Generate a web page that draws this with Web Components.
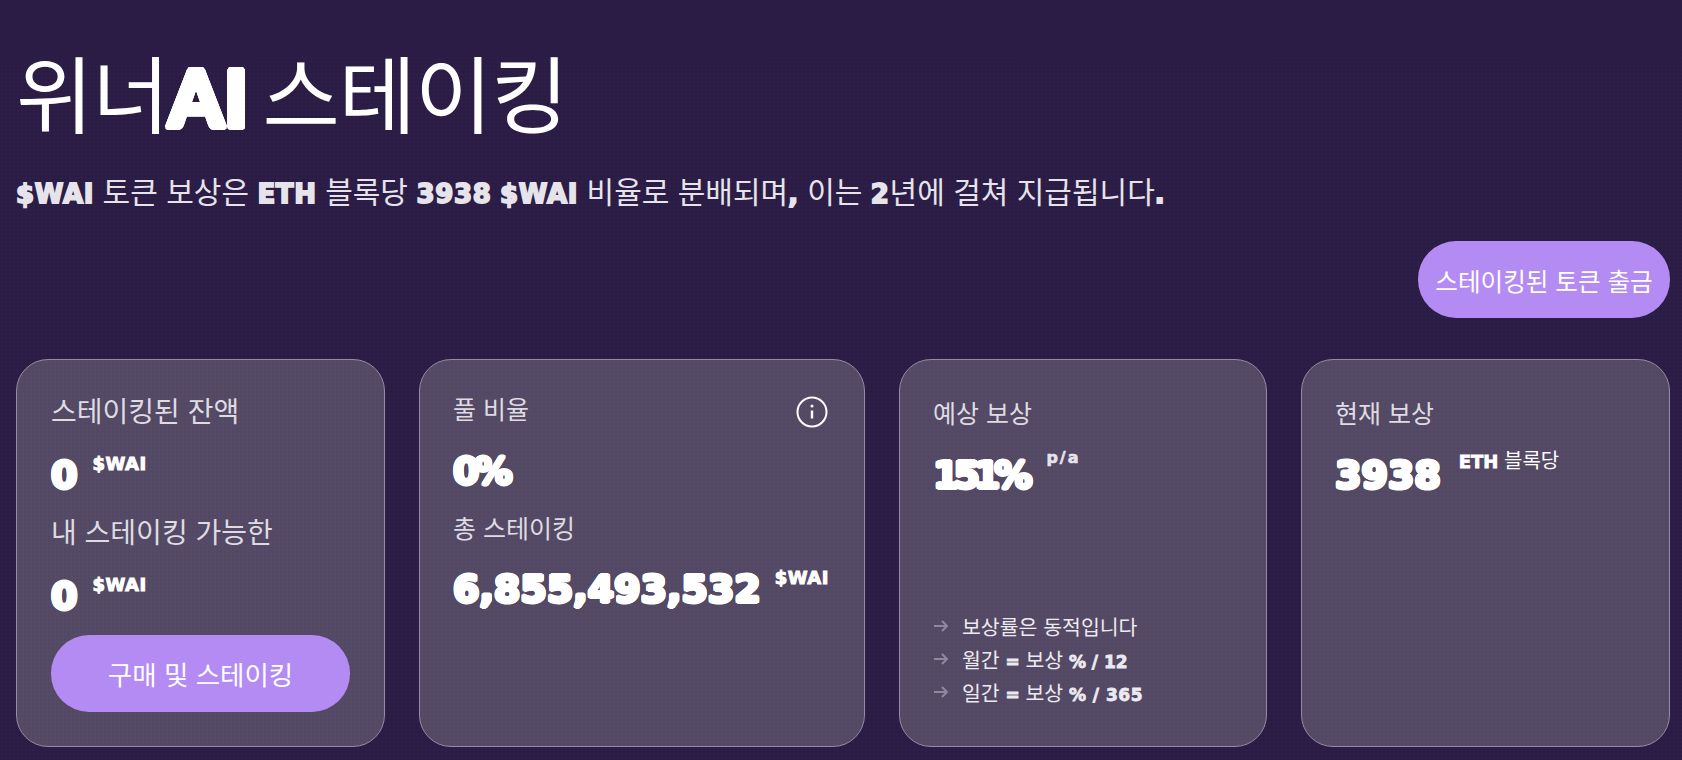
<!DOCTYPE html>
<html lang="ko"><head><meta charset="utf-8">
<style>
html,body{margin:0;height:100%;}
body{background-color:#2a1c45;background-image:linear-gradient(#2a1c45 45px,rgba(42,28,69,0) 75px),radial-gradient(circle,rgba(255,255,255,.028) .6px,transparent .9px);background-size:100% 100%,4px 4px;font-family:"Noto Sans CJK KR","Noto Sans",sans-serif;color:#fff;overflow:hidden;}
</style></head><body>
<template id="t-page"><style>
:host{display:flex;flex-direction:column;height:760px;box-sizing:border-box;padding:36px 12px 0 16px;}
h1{margin:0;font-size:84px;font-weight:400;line-height:110px;letter-spacing:-1px;word-spacing:-9px;}
p{margin:19px 0 0;font-size:30px;line-height:38px;color:#e6e4ea;font-weight:400;}
.act{display:flex;justify-content:flex-end;margin-top:28px;}
.cards{display:grid;grid-template-columns:369px 446px 368px 369px;column-gap:34px;margin-top:41px;height:388px;}
</style>
<h1><slot name="title"></slot></h1><p><slot name="sub"></slot></p>
<div class="act"><slot name="action"></slot></div>
<div class="cards"><slot></slot></div></template>

<template id="t-card"><style>
:host{display:flex;flex-direction:column;box-sizing:border-box;padding:var(--pt,32px) 34px 0 var(--pl,34px);border:1px solid #938ca3;border-radius:32px;background:#534964;background-image:radial-gradient(circle,rgba(255,255,255,.025) .6px,transparent .9px);background-size:4px 4px;min-width:0;}
</style><slot></slot></template>

<template id="t-label"><style>
:host{display:flex;justify-content:space-between;align-items:flex-start;font-size:var(--fs,28px);line-height:36px;height:36px;color:#dedbe3;font-weight:400;}
</style><slot></slot></template>

<template id="t-stat"><style>
:host{display:flex;align-items:flex-start;height:var(--h,62px);margin-top:var(--mt,0);}
.v{font-family:"DejaVu Sans","Liberation Sans",sans-serif;font-weight:700;font-size:38px;line-height:52px;text-shadow:var(--ring16);letter-spacing:var(--vls,0);margin-top:6px;white-space:nowrap;}
.u{font-size:20px;line-height:22px;margin-top:var(--ut,8px);margin-left:var(--g,15px);color:#fff;white-space:nowrap;}
</style><span class="v"><slot name="value"></slot></span><span class="u"><slot name="unit"></slot></span></template>

<template id="t-btn"><style>
:host{display:flex;align-items:center;justify-content:center;box-sizing:border-box;height:77px;padding:0 16px;background:#b38bf2;border-radius:38px;font-size:var(--fs,26.5px);color:#fff;white-space:nowrap;}
</style><slot></slot></template>

<template id="t-heavy"><style>
:host{display:inline;font-family:"DejaVu Sans","Liberation Sans",sans-serif;font-weight:700;font-size:var(--hs,26px);-webkit-text-stroke:var(--s,1.8px) currentColor;letter-spacing:var(--ls,.7px);}
</style><slot></slot></template>

<template id="t-note"><style>
:host{display:flex;align-items:center;gap:13px;height:33px;font-size:20.5px;color:#eceaf0;white-space:pre;}
svg{flex:none;width:16px;height:16px;}
</style><svg viewBox="0 0 16 16" fill="none" stroke="#8f889f" stroke-width="2" stroke-linejoin="round"><path d="M1 8h13M9 3l5 5-5 5"/></svg><span><slot></slot></span></template>

<wai-page>
  <span slot="title">위너<wai-heavy style="--s:0;--hs:78px;--ls:1px;font-family:Lato,sans-serif;font-weight:900;text-shadow:var(--ring30)">AI</wai-heavy> 스테이킹</span>
  <span slot="sub"><wai-heavy>$WAI</wai-heavy> 토큰 보상은 <wai-heavy>ETH</wai-heavy> 블록당 <wai-heavy>3938</wai-heavy> <wai-heavy>$WAI</wai-heavy> 비율로 분배되며<wai-heavy>,</wai-heavy> 이는 <wai-heavy>2</wai-heavy>년에 걸쳐 지급됩니다<wai-heavy>.</wai-heavy></span>
  <wai-btn slot="action" style="width:252px;--fs:24.6px">스테이킹된 토큰 출금</wai-btn>

  <wai-card>
    <wai-label>스테이킹된 잔액</wai-label>
    <wai-stat style="--h:70px;--mt:15px"><span slot="value">0</span><span slot="unit"><wai-heavy style="--s:1px;--hs:18px;--ls:.5px">$WAI</wai-heavy></span></wai-stat>
    <wai-label>내 스테이킹 가능한</wai-label>
    <wai-stat style="--h:70px;--mt:15px"><span slot="value">0</span><span slot="unit"><wai-heavy style="--s:1px;--hs:18px;--ls:.5px">$WAI</wai-heavy></span></wai-stat>
    <wai-btn style="margin-top:1px;width:299px">구매 및 스테이킹</wai-btn>
  </wai-card>

  <wai-card style="--pt:30px;--pl:33px">
    <wai-label style="--fs:25px"><span>풀 비율</span><svg width="32" height="32" viewBox="0 0 32 32" fill="none" style="margin:6px 2px 0 0"><circle cx="16" cy="16" r="14.5" stroke="#fff" stroke-width="2"/><path d="M16 14.5v8" stroke="#fff" stroke-width="2.4"/><circle cx="16" cy="10" r="1.5" fill="#fff"/></svg></wai-label>
    <wai-stat style="--h:70px;--mt:13px;--vls:-5px"><span slot="value">0%</span></wai-stat>
    <wai-label style="--fs:25px">총 스테이킹</wai-label>
    <wai-stat style="--mt:12px;--g:14px"><span slot="value">6,855,493,532</span><span slot="unit"><wai-heavy style="--s:1px;--hs:18px;--ls:.5px">$WAI</wai-heavy></span></wai-stat>
  </wai-card>

  <wai-card style="--pt:34px;--pl:33px">
    <wai-label style="--fs:25px">예상 보상</wai-label>
    <wai-stat style="--h:166px;--mt:13px;--vls:-6px;--ut:1px;--g:20px"><span slot="value">151%</span><span slot="unit"><wai-heavy style="--s:.6px;--hs:16px;--ls:2px;color:#e6e4ea">p/a</wai-heavy></span></wai-stat>
    <wai-note>보상률은 동적입니다</wai-note>
    <wai-note>월간 <wai-heavy style="--s:.8px;--hs:17px;--ls:0">=</wai-heavy> 보상 <wai-heavy style="--s:.8px;--hs:17px;--ls:0">% / 12</wai-heavy></wai-note>
    <wai-note>일간 <wai-heavy style="--s:.8px;--hs:17px;--ls:0">=</wai-heavy> 보상 <wai-heavy style="--s:.8px;--hs:17px;--ls:.5px">% / 365</wai-heavy></wai-note>
  </wai-card>

  <wai-card style="--pt:34px;--pl:33px">
    <wai-label style="--fs:25px">현재 보상</wai-label>
    <wai-stat style="--mt:13px;--ut:6px;--g:18px"><span slot="value">3938</span><span slot="unit"><wai-heavy style="--s:.8px;--hs:18px;--ls:0">ETH</wai-heavy> 블록당</span></wai-stat>
  </wai-card>
</wai-page>

<script>
const ring=(r,n)=>Array.from({length:n},(_,i)=>{const a=i/n*2*Math.PI;return `${(r*Math.cos(a)).toFixed(2)}px ${(r*Math.sin(a)).toFixed(2)}px 0 currentColor`}).join(",");
document.documentElement.style.setProperty("--ring16",ring(1.6,16));
document.documentElement.style.setProperty("--ring30",ring(3,24));
const def=(name,id)=>customElements.define(name,class extends HTMLElement{
  constructor(){super();this.attachShadow({mode:"open"}).appendChild(document.getElementById(id).content.cloneNode(true));}
});
def("wai-page","t-page");def("wai-card","t-card");def("wai-label","t-label");
def("wai-stat","t-stat");def("wai-btn","t-btn");def("wai-heavy","t-heavy");def("wai-note","t-note");
</script>
</body></html>
